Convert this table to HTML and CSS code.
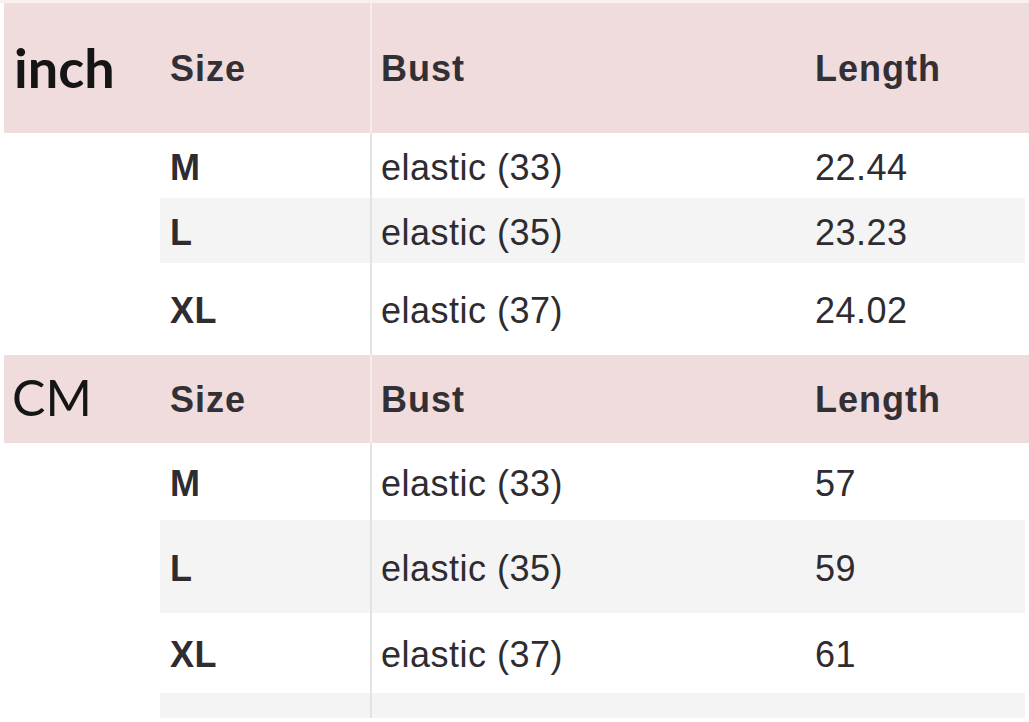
FILE: index.html
```html
<!DOCTYPE html>
<html>
<head>
<meta charset="utf-8">
<link rel="stylesheet" href="styles.css">
</head>
<body>
<div class="chart">
  <div class="row head h-inch">
    <div class="label bold-label">inch</div>
    <div class="cell size">Size</div>
    <div class="cell bust">Bust</div>
    <div class="cell len">Length</div>
  </div>
  <div class="row data r65">
    <div class="blank"></div>
    <div class="cell size">M</div>
    <div class="cell bust">elastic (33)</div>
    <div class="cell len">22.44</div>
  </div>
  <div class="row data grey r65">
    <div class="blank"></div>
    <div class="cell size">L</div>
    <div class="cell bust">elastic (35)</div>
    <div class="cell len">23.23</div>
  </div>
  <div class="row data r92">
    <div class="blank"></div>
    <div class="cell size">XL</div>
    <div class="cell bust">elastic (37)</div>
    <div class="cell len">24.02</div>
  </div>
  <div class="row head h-cm">
    <div class="label light-label">CM</div>
    <div class="cell size">Size</div>
    <div class="cell bust">Bust</div>
    <div class="cell len">Length</div>
  </div>
  <div class="row data r77">
    <div class="blank"></div>
    <div class="cell size">M</div>
    <div class="cell bust">elastic (33)</div>
    <div class="cell len">57</div>
  </div>
  <div class="row data grey r93">
    <div class="blank"></div>
    <div class="cell size">L</div>
    <div class="cell bust">elastic (35)</div>
    <div class="cell len">59</div>
  </div>
  <div class="row data r80">
    <div class="blank"></div>
    <div class="cell size">XL</div>
    <div class="cell bust">elastic (37)</div>
    <div class="cell len">61</div>
  </div>
  <div class="row data grey r25">
    <div class="blank"></div>
    <div class="cell size"></div>
    <div class="cell bust"></div>
    <div class="cell len"></div>
  </div>
</div>
</body>
</html>
```
FILE: styles.css
```css
html, body {
  margin: 0;
  padding: 0;
  background: #ffffff;
}
body {
  width: 1029px;
  height: 722px;
  overflow: hidden;
  font-family: "Liberation Sans", Arial, sans-serif;
  color: #2e2c30;
}
.chart {
  padding-top: 3px;
  background: linear-gradient(#fbf0f0, #fbf0f0) top / 100% 3px no-repeat, #fff;
}
.row {
  display: grid;
  grid-template-columns: 156px 210px 435px 220px;
  margin-left: 4px;
}
.cell {
  display: flex;
  align-items: center;
  font-size: 36px;
  letter-spacing: 0.5px;
  padding-top: 4px;
}
.size {
  padding-left: 10px;
  font-weight: bold;
}
.bust {
  border-left: 2px solid #e3e3e3;
  padding-left: 9px;
}
.len {
  padding-left: 10px;
}
.head .cell {
  font-weight: bold;
  color: #333035;
  letter-spacing: 1px;
  padding-top: 1px;
}
.head {
  background: #f0dcdc;
}
.head .bust {
  border-left-color: #f7eded;
}
.label {
  display: flex;
  align-items: center;
  font-family: Lato, "Open Sans", sans-serif;
  color: #151515;
}
.bold-label {
  font-weight: bold;
  font-size: 54px;
  padding-left: 10px;
  padding-bottom: 2px;
}
.light-label {
  font-weight: normal;
  font-size: 50px;
  padding-left: 8px;
  padding-bottom: 4px;
}
.data .blank {
  background: #ffffff;
}
.grey .cell {
  background: #f4f4f4;
}
.r65 { height: 65px; }
.r92 { height: 92px; }
.r77 { height: 77px; }
.r93 { height: 93px; }
.r80 { height: 80px; }
.r25 { height: 25px; }
.h-inch { height: 130px; }
.h-cm { height: 88px; }
```
